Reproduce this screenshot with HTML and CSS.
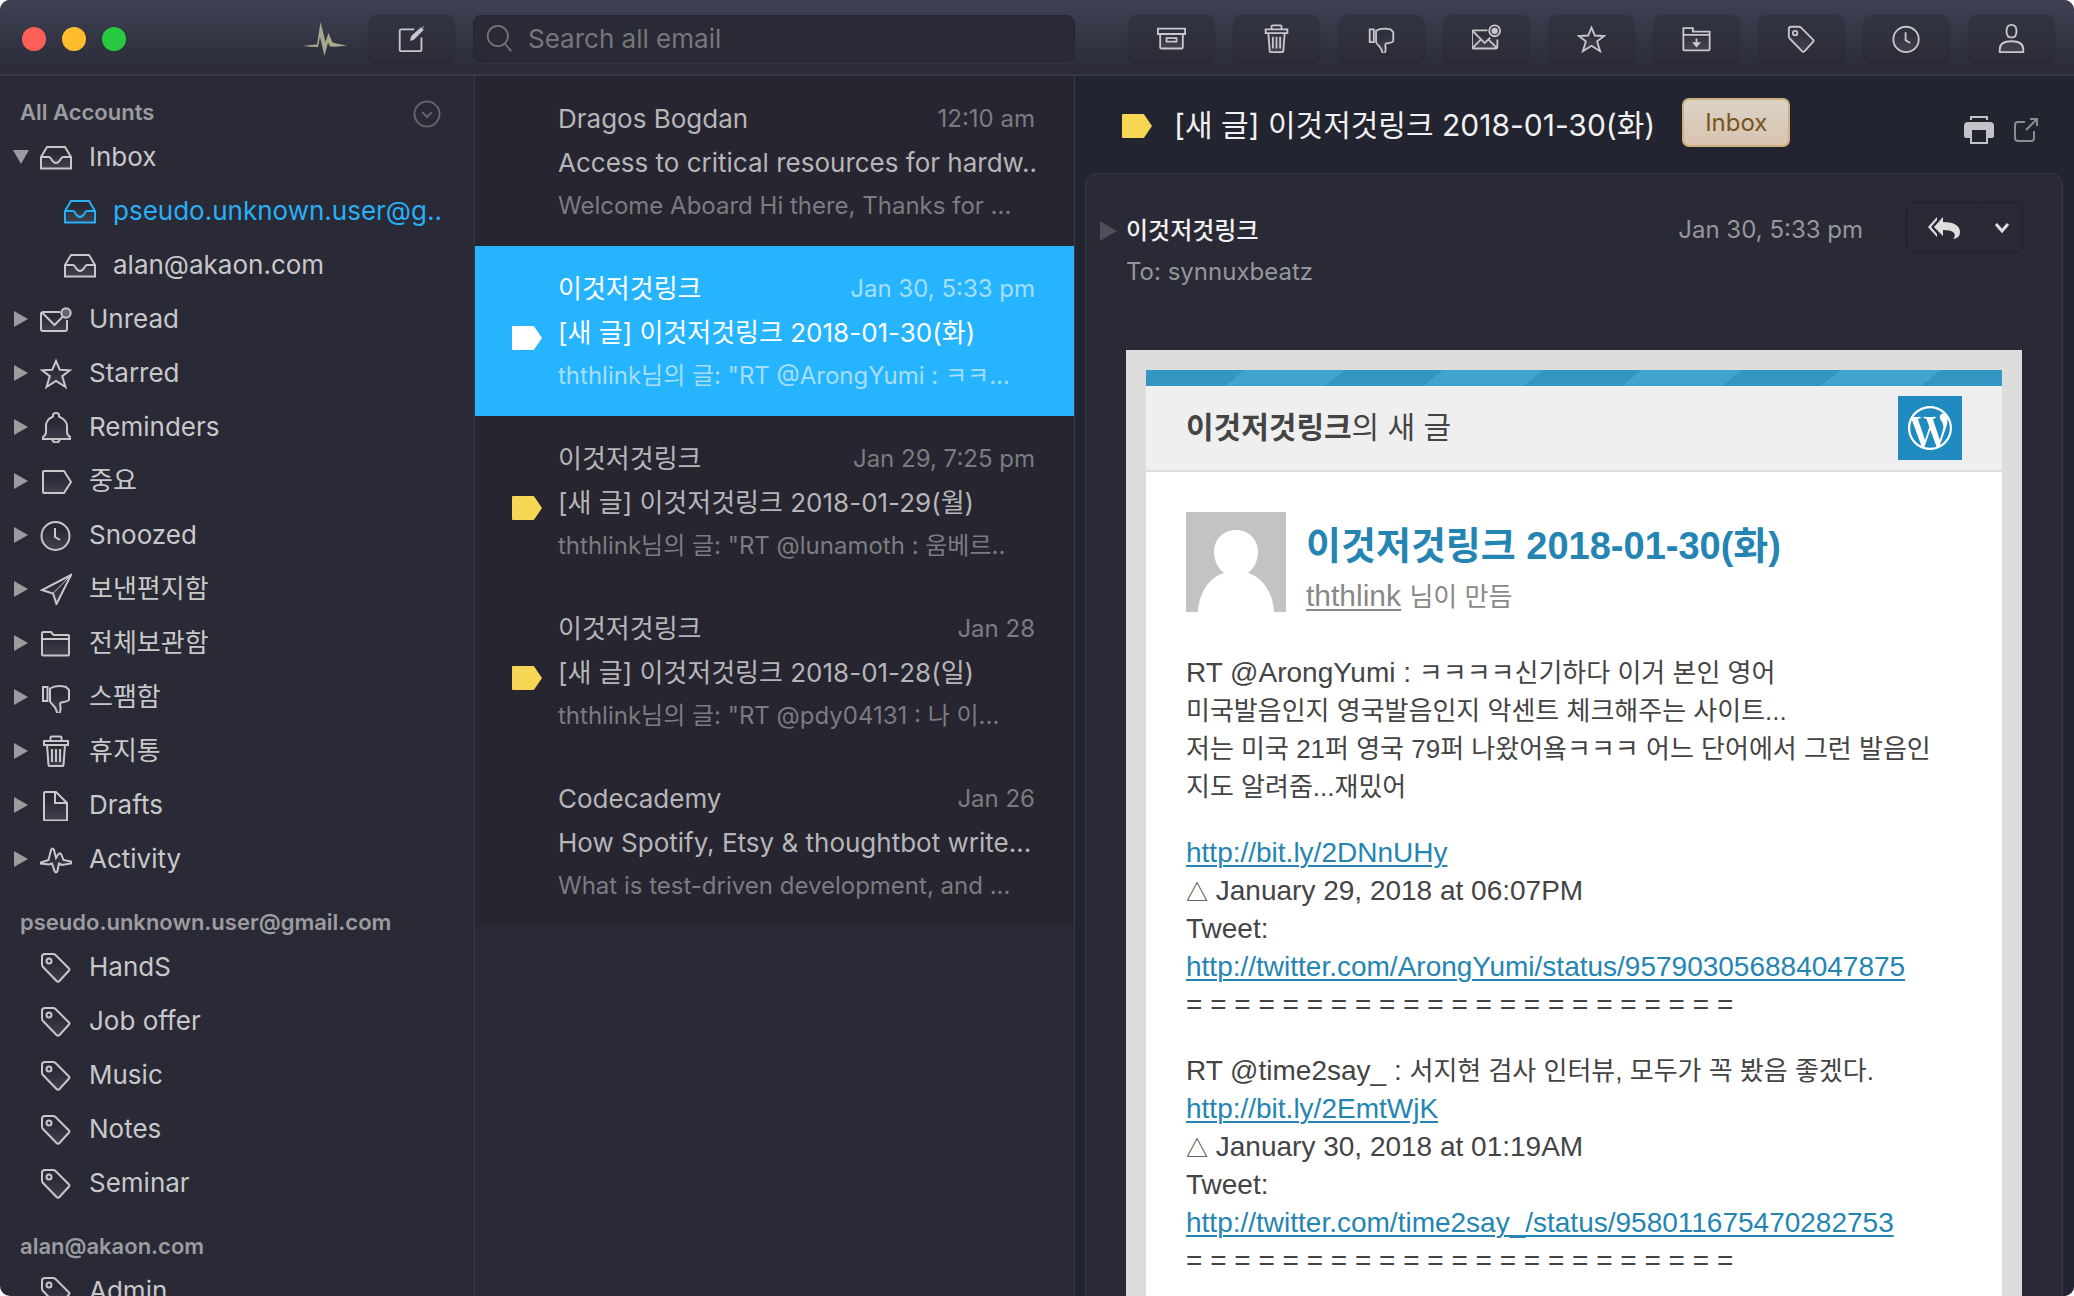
FILE: index.html
```html
<!DOCTYPE html>
<html lang="en">
<head>
<meta charset="utf-8">
<title>Mail</title>
<link rel="stylesheet" href="styles.css">
</head>
<body>
<svg class="sprite" aria-hidden="true">
  <defs>
    <linearGradient id="shade" x1="0" y1="0" x2="0" y2="1">
      <stop offset="0.3" stop-color="#fff" stop-opacity="0"/>
      <stop offset="1" stop-color="#cfc8ff" stop-opacity="0.13"/>
    </linearGradient>
  </defs>
  <symbol id="i-tray" viewBox="0 0 32 32"><path d="M1 16 7 6h18l6 10v11.500H1z"/><path d="M1 16h8c3 0 2 6 7 6s4-6 7-6h8"/></symbol>
  <symbol id="i-unread" viewBox="0 0 32 32"><path d="M20 9H3.500Q1 9 1 11v15q0 2 2 2h22q2 0 2-2v-9M2.500 10 14.500 22l8-8"/><circle class="dot" cx="26" cy="10" r="4.700"/></symbol>
  <symbol id="i-star" viewBox="0 0 32 32"><path d="m16 4 3.700 8.700L30 13.300l-7.800 5.800L25.500 30 16 24l-9.500 6 3.300-10.900L2 13.300l10.300-.6z"/></symbol>
  <symbol id="i-bell" viewBox="0 0 32 32"><path d="M3 28v-2q3-2 3-5v-6c0-6 4-8 7-9.500V4q0-2 3-2t3 2v1.500C22 7 27 9 27 15v6q0 3 3 5v2zM12 28.500q1 3 4 3t4-3"/></symbol>
  <symbol id="i-label" viewBox="0 0 32 32"><path d="M4 6h20l7 11-7 11H4q-1 0-1-1V7q0-1 1-1z"/></symbol>
  <symbol id="i-clock" viewBox="0 0 32 32"><circle cx="15.500" cy="17" r="14"/><path d="M15 9v9l5 3" fill="none"/></symbol>
  <symbol id="i-send" viewBox="0 0 32 32"><path d="M31 2 2 17l11 3.500L16.500 31z"/><path d="M13 20.500 31 2" class="thin"/></symbol>
  <symbol id="i-folder" viewBox="0 0 32 32"><path d="M2 27.500V6.500Q2 5 3.500 5H11l2.500 3H28q1 0 1 1v18.500q0 1-1 1H3q-1 0-1-1zM2 12h27"/></symbol>
  <symbol id="i-thumb" viewBox="0 0 32 32"><path d="M3 6h4.500v14H3zM10 7.500c5-3 12-2.500 16-1.500l3 3v9.500c0 2-4 2.500-8 3-2 1 0 4-.5 6 0 3-.5 5-2 5s-2-2-2.500-4c-1-4-5-5-6-8.500z"/></symbol>
  <symbol id="i-trash" viewBox="0 0 32 32"><path d="M4 6h24v4H4zM10.500 6V2.500q0-1 1-1h9q1 0 1 1V6M7 10l1.500 20q0 1 1 1h13q1 0 1-1L25 10M12 14v13M16 14v13M20 14v13"/></symbol>
  <symbol id="i-file" viewBox="0 0 32 32"><path d="M5 3h11l11 11v17.500H5q-1 0-1-1V4q0-1 1-1zM15 3v11h12"/></symbol>
  <symbol id="i-activity" viewBox="0 0 32 32"><path d="M1 19.500 8.500 17 11 7q1.500-3 3 0l2 8 2.500-4q2-1.500 3 1l2 5 7.500 1.500v2L22 22l-3-1.500L17.500 28q-1.500 3-3 0l-2.500-7.500-3 1L1 20.500z"/></symbol>
  <symbol id="i-tag" viewBox="0 0 32 32"><path d="M2 5.500Q2 3 5 3h8q1.500 0 2.500 1L29 17.500q1 1 0 2L19.500 30q-1.500 1.500-3 0L3 16q-1-1-1-2.500z"/><circle cx="9" cy="10" r="2.500"/></symbol>
  <symbol id="i-compose" viewBox="0 0 32 32"><path d="M19 6H5Q3 6 3 8v20q0 2 2 2h20q2 0 2-2V15" fill="none"/><path d="m15 18 1-4.500L26.500 4 29 6.500 18.500 17zM27.500 4.500 30 2.500" class="pencil"/></symbol>
  <symbol id="i-search" viewBox="0 0 32 32"><circle cx="14" cy="13" r="12"/><path d="m22 22 8 9"/></symbol>
  <symbol id="i-archive" viewBox="0 0 32 32"><path d="M1 5h30v6H1zM3.500 11.500V26q0 1 1 1h23q1 0 1-1V11.500M10.500 15.500h11v4h-11z"/></symbol>
  <symbol id="i-mail" viewBox="0 0 32 32"><path d="M17 7H1.500Q0 7 0 8.500v17Q0 27 1.500 27h25q1.500 0 1.500-1.500V17M1 8l13 13 6-6M1 26l8.500-8.500M27 26l-8.500-8.500"/><circle cx="25" cy="7.500" r="6"/><circle class="tip" cx="25" cy="7.500" r="3.500"/></symbol>
  <symbol id="i-move" viewBox="0 0 32 32"><path d="M1.500 4.500H12v4h18.500V28q0 1-1 1H2.500q-1 0-1-1zM1.500 12h29M16 16v6"/><path class="tip" d="m11 20 5 6 5-6z"/></symbol>
  <symbol id="i-person" viewBox="0 0 32 32"><path d="M10.500 8c0-5 2-7 5.500-7s5.500 2 5.500 7-2 7-5.500 7-5.500-2-5.500-7zM3 31v-3c0-6 4-9 13-9s13 3 13 9v3z"/></symbol>
  <symbol id="i-flag" viewBox="0 0 30 24"><path d="M1 0h20q1 0 1.500 1L30 12l-7.500 11q-.5 1-1.500 1H1q-1 0-1-1V1q0-1 1-1z"/></symbol>
</svg>

<div class="app">
  <header class="toolbar">
    <div class="bar-left">
      <div class="lights"><button class="light red" aria-label="Close"></button><button class="light amber" aria-label="Minimise"></button><button class="light green" aria-label="Zoom"></button></div>
      <svg class="pulse" viewBox="0 0 44 34" aria-hidden="true"><path d="M0 24q8-1.500 14-1.500L17.500 0l5 20 3-9 4 9.500Q37 22.500 44 23.500 36 25 27 24.500l-2-4-3.500 13.500L17 15l-2 10Q7 25 0 24z"/></svg>
      <button class="tool" aria-label="Compose"><svg class="icon"><use href="#i-compose"/></svg></button>
    </div>
    <label class="search"><svg class="icon"><use href="#i-search"/></svg><input type="search" placeholder="Search all email" aria-label="Search all email"></label>
    <div class="bar-right">
      <button class="tool" aria-label="Archive"><svg class="icon"><use href="#i-archive"/></svg></button>
      <button class="tool" aria-label="Trash"><svg class="icon"><use href="#i-trash"/></svg></button>
      <button class="tool" aria-label="Mark as spam"><svg class="icon"><use href="#i-thumb"/></svg></button>
      <button class="tool" aria-label="Mark as unread"><svg class="icon"><use href="#i-mail"/></svg></button>
      <button class="tool" aria-label="Star"><svg class="icon"><use href="#i-star"/></svg></button>
      <button class="tool" aria-label="Move to folder"><svg class="icon"><use href="#i-move"/></svg></button>
      <button class="tool" aria-label="Apply label"><svg class="icon"><use href="#i-tag"/></svg></button>
      <button class="tool" aria-label="Snooze"><svg class="icon"><use href="#i-clock"/></svg></button>
      <button class="tool" aria-label="Contact"><svg class="icon"><use href="#i-person"/></svg></button>
    </div>
  </header>

  <nav class="sidebar">
    <section>
      <h2>All Accounts <button class="collapse" aria-label="Choose account"><svg viewBox="0 0 28 28"><circle cx="14" cy="14" r="12.500"/><path d="m9 12 5 5 5-5"/></svg></button></h2>
      <ul>
        <li><a href="#"><i class="tri open"></i><svg class="icon"><use href="#i-tray"/></svg>Inbox</a></li>
        <li class="sub on"><a href="#"><svg class="icon"><use href="#i-tray"/></svg>pseudo.unknown.user@g..</a></li>
        <li class="sub"><a href="#"><svg class="icon"><use href="#i-tray"/></svg>alan@akaon.com</a></li>
        <li><a href="#"><i class="tri"></i><svg class="icon"><use href="#i-unread"/></svg>Unread</a></li>
        <li><a href="#"><i class="tri"></i><svg class="icon"><use href="#i-star"/></svg>Starred</a></li>
        <li><a href="#"><i class="tri"></i><svg class="icon"><use href="#i-bell"/></svg>Reminders</a></li>
        <li><a href="#"><i class="tri"></i><svg class="icon"><use href="#i-label"/></svg>중요</a></li>
        <li><a href="#"><i class="tri"></i><svg class="icon"><use href="#i-clock"/></svg>Snoozed</a></li>
        <li><a href="#"><i class="tri"></i><svg class="icon"><use href="#i-send"/></svg>보낸편지함</a></li>
        <li><a href="#"><i class="tri"></i><svg class="icon"><use href="#i-folder"/></svg>전체보관함</a></li>
        <li><a href="#"><i class="tri"></i><svg class="icon"><use href="#i-thumb"/></svg>스팸함</a></li>
        <li><a href="#"><i class="tri"></i><svg class="icon"><use href="#i-trash"/></svg>휴지통</a></li>
        <li><a href="#"><i class="tri"></i><svg class="icon"><use href="#i-file"/></svg>Drafts</a></li>
        <li><a href="#"><i class="tri"></i><svg class="icon"><use href="#i-activity"/></svg>Activity</a></li>
      </ul>
    </section>
    <section>
      <h2>pseudo.unknown.user@gmail.com</h2>
      <ul>
        <li class="tagged"><a href="#"><svg class="icon"><use href="#i-tag"/></svg>HandS</a></li>
        <li class="tagged"><a href="#"><svg class="icon"><use href="#i-tag"/></svg>Job offer</a></li>
        <li class="tagged"><a href="#"><svg class="icon"><use href="#i-tag"/></svg>Music</a></li>
        <li class="tagged"><a href="#"><svg class="icon"><use href="#i-tag"/></svg>Notes</a></li>
        <li class="tagged"><a href="#"><svg class="icon"><use href="#i-tag"/></svg>Seminar</a></li>
      </ul>
    </section>
    <section>
      <h2>alan@akaon.com</h2>
      <ul>
        <li class="tagged"><a href="#"><svg class="icon"><use href="#i-tag"/></svg>Admin</a></li>
      </ul>
    </section>
  </nav>

  <section class="threads" aria-label="Messages">
    <ul>
      <li><a href="#">
        <div class="top"><span>Dragos Bogdan</span><time>12:10 am</time></div>
        <div class="subject">Access to critical resources for hardw..</div>
        <div class="snippet">Welcome Aboard Hi there, Thanks for ...</div></a></li>
      <li class="selected"><a href="#"><svg class="flag"><use href="#i-flag"/></svg>
        <div class="top"><span>이것저것링크</span><time>Jan 30, 5:33 pm</time></div>
        <div class="subject">[새 글] 이것저것링크 2018-01-30(화)</div>
        <div class="snippet">ththlink님의 글: "RT @ArongYumi : ㅋㅋ...</div></a></li>
      <li><a href="#"><svg class="flag"><use href="#i-flag"/></svg>
        <div class="top"><span>이것저것링크</span><time>Jan 29, 7:25 pm</time></div>
        <div class="subject">[새 글] 이것저것링크 2018-01-29(월)</div>
        <div class="snippet">ththlink님의 글: "RT @lunamoth : 움베르..</div></a></li>
      <li><a href="#"><svg class="flag"><use href="#i-flag"/></svg>
        <div class="top"><span>이것저것링크</span><time>Jan 28</time></div>
        <div class="subject">[새 글] 이것저것링크 2018-01-28(일)</div>
        <div class="snippet">ththlink님의 글: "RT @pdy04131 : 나 이...</div></a></li>
      <li><a href="#">
        <div class="top"><span>Codecademy</span><time>Jan 26</time></div>
        <div class="subject">How Spotify, Etsy &amp; thoughtbot write...</div>
        <div class="snippet">What is test-driven development, and ...</div></a></li>
    </ul>
  </section>

  <main class="reader">
    <div class="subject-bar">
      <svg class="flag"><use href="#i-flag"/></svg>
      <h1>[새 글] 이것저것링크 2018-01-30(화)</h1>
      <button class="chip">Inbox</button>
      <button class="plain print" aria-label="Print"><svg viewBox="0 0 30 28"><path d="M6 0h18v4h-2V2H8v2H6zM4 6h22q4 0 4 4v10q0 2-2 2h-4v6H6v-6H2q-2 0-2-2V10q0-4 4-4zm4 9v11h14V14H8z" fill-rule="evenodd"/></svg></button>
      <button class="plain popout" aria-label="Open in new window"><svg viewBox="0 0 24 24"><path d="M11 4H4Q1 4 1 7v13q0 3 3 3h13q3 0 3-3v-7M12 12 23 1M16 1h7v7"/></svg></button>
    </div>
    <article class="card">
      <header class="meta">
        <i class="tri"></i>
        <div class="who"><strong>이것저것링크</strong><span>To: synnuxbeatz</span></div>
        <time>Jan 30, 5:33 pm</time>
        <div class="reply">
          <button aria-label="Reply all"><svg class="reply-all" viewBox="0 0 32 22"><path d="M15 0v5c10 0 17 3 17 10q0 6-7 7c4-4 2-9-10-9v6L6 10z"/><path d="M9 0v3L3 10l6 7v3L0 10z"/></svg></button>
          <button aria-label="More"><svg class="more" viewBox="0 0 16 12"><path d="m2 2 6 7 6-7"/></svg></button>
        </div>
      </header>
      <div class="mail" lang="ko">
        <div class="stripes"></div>
        <div class="blog"><p><b>이것저것링크</b>의 새 글</p>
          <svg class="wp" viewBox="0 0 24 24" role="img" aria-label="WordPress"><path fill-rule="evenodd" d="M21.469 6.825c.84 1.537 1.318 3.300 1.318 5.175 0 3.979-2.156 7.456-5.363 9.325l3.295-9.527c.615-1.540.82-2.771.82-3.864 0-.405-.026-.78-.07-1.110m-7.981.105c.647-.03 1.232-.105 1.232-.105.582-.075.514-.93-.067-.899 0 0-1.755.135-2.880.135-1.064 0-2.850-.15-2.850-.15-.585-.03-.661.855-.075.885 0 0 .54.061 1.125.09l1.680 4.605-2.370 7.080L5.354 6.900c.649-.03 1.234-.1 1.234-.1.585-.075.516-.93-.065-.896 0 0-1.746.138-2.874.138-.2 0-.438-.008-.69-.015C4.911 3.150 8.235 1.215 12 1.215c2.809 0 5.365 1.072 7.286 2.833-.046-.003-.091-.009-.141-.009-1.060 0-1.812.923-1.812 1.914 0 .89.513 1.643 1.060 2.531.411.72.89 1.643.89 2.977 0 .915-.354 1.994-.821 3.479l-1.075 3.585-3.900-11.610zM12 22.784c-1.059 0-2.081-.153-3.048-.437l3.237-9.406 3.315 9.087c.024.053.05.101.078.149-1.120.393-2.325.609-3.582.609M1.211 12c0-1.564.336-3.050.935-4.390L7.290 21.709C3.694 19.960 1.212 16.271 1.211 12M12 0C5.385 0 0 5.385 0 12s5.385 12 12 12 12-5.385 12-12S18.615 0 12 0"/></svg></div>
        <div class="post">
          <div class="author">
            <svg class="avatar" viewBox="0 0 100 100" aria-hidden="true"><path d="M50 18c13 0 22 10 22 22 0 9-4 16-10 21 14 4 25 19 26 39H12c1-20 12-35 26-39-6-5-10-12-10-21 0-12 9-22 22-22z"/></svg>
            <div><h3><a href="#">이것저것링크 2018-01-30(화)</a></h3><p class="byline"><a href="#">ththlink</a> <span class="ko">님이 만듬</span></p></div>
          </div>
          <p>RT @ArongYumi : <span class="ko">ㅋㅋㅋㅋ신기하다 이거 본인 영어</span><br>
          <span class="ko">미국발음인지 영국발음인지 악센트 체크해주는 사이트...</span><br>
          <span class="ko">저는 미국 21퍼 영국 79퍼 나왔어욬ㅋㅋㅋ 어느 단어에서 그런 발음인</span><br>
          <span class="ko">지도 알려줌...재밌어</span></p>
          <p><a href="#">http://bit.ly/2DNnUHy</a><br>
          <span class="delta">△</span> January 29, 2018 at 06:07PM<br>
          Tweet:<br>
          <a href="#">http://twitter.com/ArongYumi/status/957903056884047875</a><br>
          = = = = = = = = = = = = = = = = = = = = = = =</p>
          <p>RT @time2say_ : <span class="ko">서지현 검사 인터뷰, 모두가 꼭 봤음 좋겠다.</span><br>
          <a href="#">http://bit.ly/2EmtWjK</a><br>
          <span class="delta">△</span> January 30, 2018 at 01:19AM<br>
          Tweet:<br>
          <a href="#">http://twitter.com/time2say_/status/958011675470282753</a><br>
          = = = = = = = = = = = = = = = = = = = = = = =</p>
        </div>
      </div>
    </article>
  </main>
</div>
</body>
</html>
```

FILE: styles.css
```css
* { box-sizing: border-box; }
body { margin: 0; background: #fff; font: 26px/44px Inter, "Noto Sans CJK KR", sans-serif; color: #c8c8ca; }
h1, h2, h3, p, ul { margin: 0; padding: 0; font-weight: 400; }
ul { list-style: none; }
a { color: inherit; text-decoration: none; }
button { margin: 0; padding: 0; border: 0; background: none; color: inherit; font: inherit; }
svg { display: block; flex: none; }
.sprite { position: absolute; width: 0; height: 0; }

.app {
  display: grid;
  grid-template: 76px minmax(0, 1fr) / 475px 600px minmax(0, 1fr);
  height: 100vh;
  overflow: hidden;
  border-radius: 10px;
  background: #292a35;
}

/* icons */
.icon { width: 32px; height: 32px; fill: url(#shade); stroke: currentColor; stroke-width: 2; overflow: visible; }
.thin { stroke-width: 1; }
.dot { fill: #66666e; }
.pencil { fill: currentColor; stroke-width: 1; }
.tip { fill: currentColor; stroke: none; }
.flag { width: 30px; height: 24px; fill: #f7d654; }
.tri { width: 0; height: 0; border: solid transparent; border-width: 8px 0 8px 14px; border-left-color: #9b9ba0; }
.tri.open { border-width: 14px 8px 0; border-color: #9b9ba0 transparent transparent; }

/* toolbar */
.toolbar {
  grid-column: 1 / -1;
  display: grid;
  grid-template-columns: 473px 602px minmax(0, 1fr);
  align-items: center;
  padding-top: 3px;
  border-bottom: 2px solid #37384f;
  background: linear-gradient(#3f4053, #2a2b36);
}
.bar-left { display: flex; align-items: center; padding: 0 19px 0 22px; }
.lights { display: flex; gap: 16px; margin-right: auto; }
.light { width: 24px; height: 24px; border-radius: 50%; }
.red { background: #ff5f57; }
.amber { background: #ffbd2e; }
.green { background: #28ca41; }
.pulse { width: 44px; height: 34px; margin-right: 22px; fill: #a6a98c; }
.bar-right { display: flex; justify-content: flex-end; gap: 20px; padding-right: 20px; }
.tool {
  display: grid;
  place-items: center;
  width: 85px;
  height: 47px;
  border-radius: 8px;
  background: linear-gradient(#333442, #2b2c37);
  box-shadow: 0 1px 2px rgba(20, 20, 30, .5);
}
.tool .icon { width: 29px; height: 29px; }
.search {
  display: flex;
  align-items: center;
  gap: 15px;
  height: 47px;
  padding: 0 12px;
  border: 1px solid #252630;
  border-radius: 8px;
  background: #292a35;
  color: #77777a;
}
.search .icon { width: 27px; height: 27px; fill: none; }
.search input { flex: 1; padding: 0; border: 0; outline: 0; background: none; color: #ddd; font: 26px/44px Inter, sans-serif; }
.search input::placeholder { color: #77777a; opacity: 1; }

/* sidebar */
.sidebar { padding-top: 18px; border-right: 1px solid #37384a; overflow: hidden; white-space: nowrap; }
.sidebar section + section { margin-top: 18px; }
.sidebar h2 { display: flex; align-items: center; justify-content: space-between; height: 36px; padding: 0 33px 0 20px; font-size: 22px; font-weight: 600; color: #9c9ca1; }
.collapse svg { width: 28px; height: 28px; margin-top: 4px; fill: none; stroke: #62636c; stroke-width: 2; }
.sidebar li a { display: flex; align-items: center; height: 54px; padding-left: 14px; }
.sidebar .icon { margin: 0 17px 0 12px; }
.sidebar .tri.open { margin: 0 -1px; }
.sidebar .tagged a { padding-left: 28px; }
.sidebar .sub a { padding-left: 52px; }
.on { color: #27b0f8; }

/* message list */
.threads { border-right: 1px solid #37384a; overflow: hidden; font-weight: 500; }
.threads li { background: #262530; color: #b6b6b8; }
.threads a { position: relative; display: block; height: 170px; padding: 21px 39px 0 83px; white-space: nowrap; }
.threads .flag { position: absolute; left: 37px; top: 80px; }
.top { display: flex; justify-content: space-between; }
.top time, .snippet { font-size: 24px; color: #7c7c80; }
.snippet { line-height: 41px; }
.threads .selected { background: #26b4ff; color: #fff; font-weight: 400; }
.selected .flag { fill: #fff; }
.selected time, .selected .snippet { color: #a5dffc; }

/* reader */
.reader { display: flex; flex-direction: column; padding: 0 11px 0 10px; background: #22242f; overflow: hidden; }
.subject-bar { display: flex; align-items: center; height: 97px; flex: none; padding: 2px 25px 0 37px; }
.subject-bar h1 { margin: 0 27px 2px 22px; font-size: 30px; color: #f0f0f0; white-space: nowrap; }
.chip { width: 108px; height: 49px; margin-bottom: 6px; border: 2px solid #cfaf7f; border-radius: 7px; background: linear-gradient(#dad3c5, #d8c4b0); color: #775420; font-size: 24px; line-height: 40px; }
.print { margin-left: auto; }
.print svg { width: 30px; height: 28px; margin-top: 8px; fill: #c4c4c8; }
.popout svg { width: 24px; height: 24px; margin: 8px 0 0 20px; fill: none; stroke: #8b8b90; stroke-width: 2; }
.card { flex: 1; border: 1px solid #373844; border-bottom: 0; border-radius: 12px 12px 0 0; background: #292a35; padding: 0 40px; }
.meta { display: flex; height: 176px; padding-top: 28px; color: #96969b; }
.meta .tri { margin: 19px 9px 0 -26px; border-width: 10px 0 10px 17px; border-left-color: #4e4f59; }
.who { display: flex; flex-direction: column; margin: 8px auto 0 0; line-height: 41px; font-size: 24px; }
.who strong { color: #f0f0f0; font-weight: 500; }
.meta time { margin: 6px 43px 0 0; font-size: 24px; }
.reply { display: flex; height: 51px; margin-right: -1px; border: 1px solid #1f202a; border-radius: 8px; color: #dedede; }
.reply button { display: grid; place-items: center; width: 74px; }
.reply button + button { width: 41px; border-left: 1px solid #22232d; }
.reply-all { width: 32px; height: 22px; fill: currentColor; }
.more { width: 16px; height: 12px; fill: none; stroke: currentColor; stroke-width: 3; }

/* mail body */
.mail { padding: 20px 20px 0; background: #ddd; color: #444; font: 28px/38px "Liberation Sans", "Noto Sans CJK KR", sans-serif; }
.stripes { height: 16px; background: repeating-linear-gradient(141deg, #3395c1 0 62px, #43a3d0 62px 125px); }
.blog { display: flex; align-items: center; justify-content: space-between; height: 86px; padding: 0 40px; border-bottom: 2px solid #ddd; background: #efefef; font-size: 30px; }
.wp { width: 64px; height: 64px; padding: 10px; background: #1f8bc0; fill: #fff; }
.post { padding: 40px 40px 80px; background: #fff; }
.post > p { margin-bottom: 28px; white-space: nowrap; }
.post a { color: #2585b2; text-decoration: underline; text-decoration-thickness: 2px; text-underline-offset: 3px; }
.author { display: flex; gap: 20px; height: 100px; margin-bottom: 42px; }
.author h3 { padding: 12px 0 9px; font-size: 38px; font-weight: 700; line-height: 44px; }
.author h3 a { text-decoration: none; }
.byline, .author .byline a { color: #888; }
.byline { font-size: 30px; }
.avatar { width: 100px; height: 100px; background: #c3c3c3; fill: #fff; }
.ko, .delta { font-size: 26px; line-height: 1; }
.delta { font-size: 22px; }
```
